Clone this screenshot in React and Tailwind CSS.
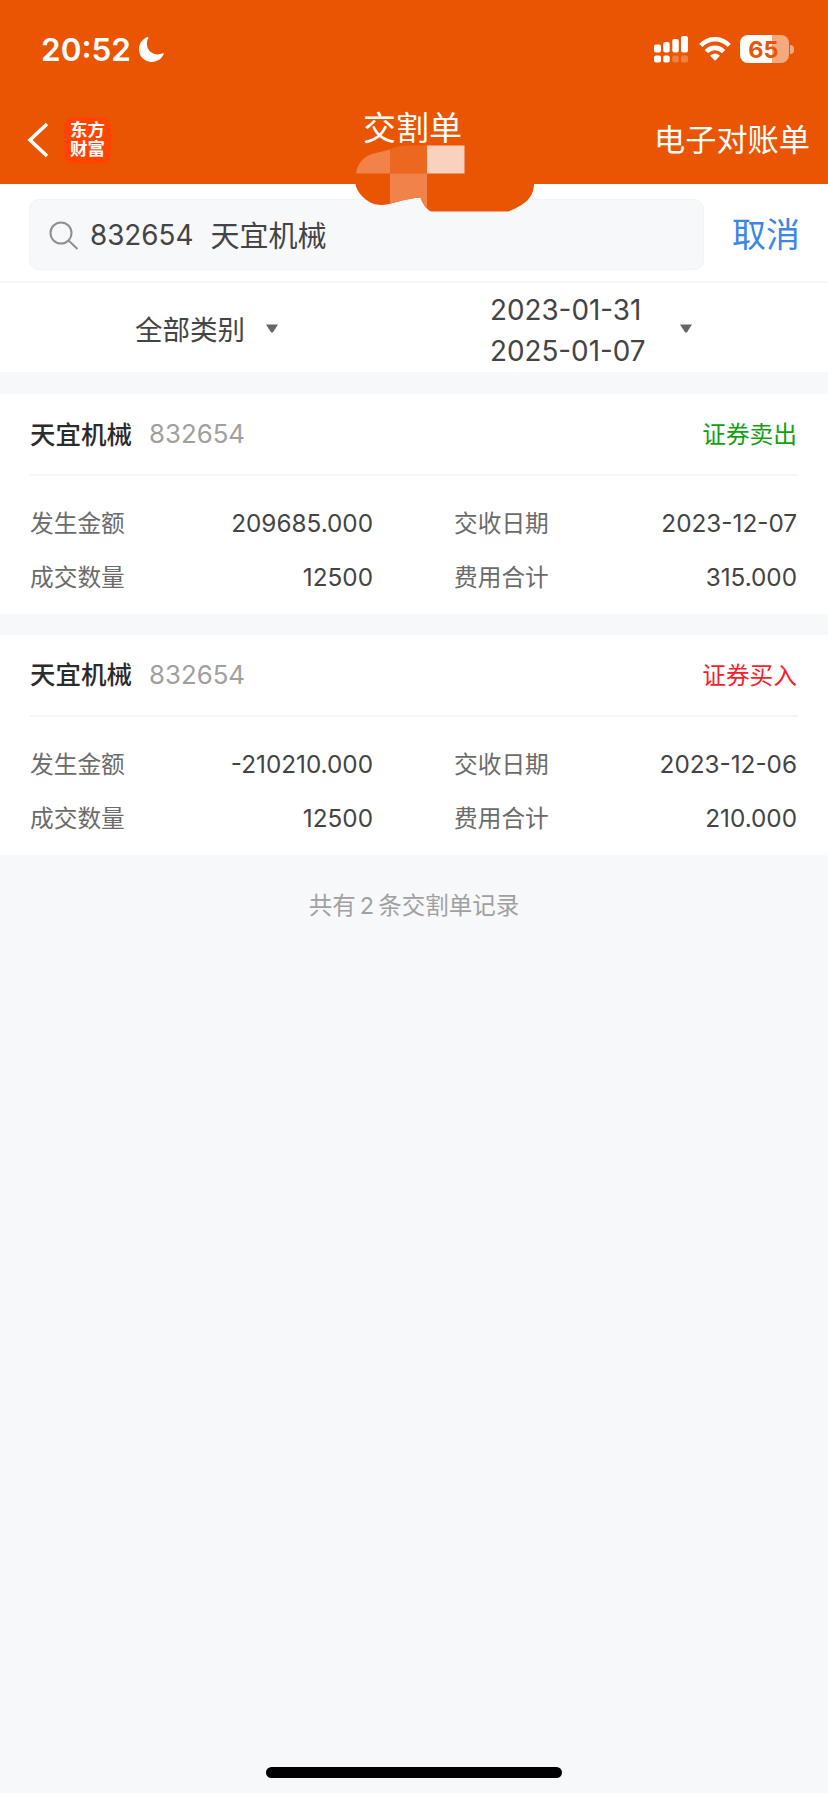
const records = [
  {
    name: '天宜机械',
    code: '832654',
    type: '证券卖出',
    sell: true,
    amount: '209685.000',
    date: '2023-12-07',
    quantity: '12500',
    fee: '315.000',
  },
  {
    name: '天宜机械',
    code: '832654',
    type: '证券买入',
    sell: false,
    amount: '-210210.000',
    date: '2023-12-06',
    quantity: '12500',
    fee: '210.000',
  },
];

function StatusBar() {
  return (
    <div className="flex h-[98px] items-center justify-between pl-[41px] pr-[34px] text-white">
      <div className="flex items-center gap-[8px]">
        <span className="pt-[2px] text-[31.500px] leading-none font-semibold">20:52</span>
        <svg width="25" height="25" viewBox="0 0 25 25" fill="currentColor">
          <path d="M8.5 0C3.5 1.8 0 6.600 0 12.200C0 19.200 5.600 25 12.800 25C18.300 25 23 21.600 24.900 16.800C24.500 16.300 24 16.200 23.200 16.600C16 19.300 8.300 14.800 7.900 7.200C7.800 5 8.300 3 9.200 1.100C9.500 .3 9.300 -.1 8.500 0Z" />
        </svg>
      </div>

      <div className="flex items-center">
        {/* Dual SIM signal */}
        <svg width="35" height="28" viewBox="0 0 35 28" fill="currentColor">
          <rect x="0" y="9.500" width="7" height="8" rx="2" />
          <rect x="9.200" y="7" width="6.500" height="10.500" rx="2" />
          <rect x="18.300" y="4" width="6.500" height="13.500" rx="2" />
          <rect x="27" y="1" width="7" height="16.500" rx="2" />
          <rect x="0" y="20.500" width="7" height="7" rx="2" />
          <rect x="9.200" y="20.500" width="6.500" height="7" rx="2" />
          <rect x="18.300" y="20.500" width="6.500" height="7" rx="2" opacity="0.25" />
          <rect x="27" y="20.500" width="7" height="7" rx="2" opacity="0.25" />
        </svg>
        <svg className="ml-[10px]" width="32" height="24" viewBox="0 0 32 24" fill="none" stroke="currentColor">
          <path d="M1.800 8.500C9.800 .2 22.200 .2 30.200 8.500" strokeWidth="4.600" />
          <path d="M7.400 14.600C12.300 9.600 19.700 9.600 24.600 14.600" strokeWidth="4.600" />
          <path d="M11.200 18.700C14 16.200 18 16.200 20.800 18.700L16.600 23.200Q16 23.700 15.400 23.200Z" fill="currentColor" stroke="none" />
        </svg>
        <div className="ml-[9px] flex items-center gap-px">
          <div className="flex h-[28px] w-[49px] items-center justify-center rounded-[8px] bg-linear-to-r from-white from-65% to-[#f4a97f] to-65%">
            <span className="pt-[2px] pr-[2px] text-[23.500px] leading-none font-bold text-[#ea5504]">65</span>
          </div>
          <div className="h-[9px] w-[4px] rounded-r-full bg-[#f4a97f]" />
        </div>
      </div>
    </div>
  );
}

function TitleBar() {
  return (
    <div className="relative flex h-[86px] items-center justify-between pr-[18px] pl-[27px] text-white">
      <div className="flex items-center gap-[15px] pb-[2px]">
        <svg width="22" height="36" viewBox="0 0 22 36" fill="none" stroke="currentColor" strokeWidth="3.600">
          <path d="M20 2L3 18L20 34" />
        </svg>
        <div className="flex h-[47px] w-[47px] flex-col items-center justify-center rounded-[9px] bg-[#ff4400] font-['Liberation_Serif','Noto_Sans_CJK_SC',serif] text-[17.500px] leading-[19px] font-bold">
          <span>东方</span>
          <span>财富</span>
        </div>
      </div>
      <h1 className="absolute top-[13px] left-[363px] text-[33px] leading-[34px] whitespace-nowrap">交割单</h1>
      <span className="pb-[1px] text-[31.200px] leading-none">电子对账单</span>

      {/* Mosaic patch under the title */}
      <svg className="absolute top-[46px] left-[354px]" width="182" height="68" viewBox="354 144 182 68">
        <path d="M355.500 173V184C357 194 369 205 381 205C391 205 405 198 420.500 197.500C422.500 203 426 209 431 211.500H508C520 207 534 200 534 184V173Z" fill="#ea5504" />
        <path d="M356 173.500C358 161 366 154.500 378 152.500L390 149.500V173.500Z" fill="#f0824a" />
        <path d="M390 149.500Q398 145.500 407 145.500H427V173.500H390Z" fill="#ec681f" />
        <path d="M390 173.500H427V208Q422 203 420.500 197.500Q412 198 390 203.500Z" fill="#f0824a" />
        <path d="M427 145.500H464.500V173.500H427Z" fill="#f8d2be" />
      </svg>
    </div>
  );
}

function Caret() {
  return (
    <svg width="12" height="9" viewBox="0 0 12 9" fill="#666666">
      <path d="M0 0.500H12L7 8.200Q6 9 5 8.200Z" />
    </svg>
  );
}

function Field({ label, value }) {
  return (
    <div className="flex h-[54px] items-center justify-between">
      <span className="pt-[2px] text-[23.700px] text-[#6b6b6b]">{label}</span>
      <span className="pt-[1px] text-[24.300px] text-[#444444]">{value}</span>
    </div>
  );
}

function RecordCard({ record }) {
  return (
    <section className="h-[220px] bg-white px-[30px]">
      <div className="flex h-[82px] items-center border-b-2 border-[#f5f6f7]">
        <span className="pt-[2px] text-[25.500px] font-medium text-[#2b2b2b]">{record.name}</span>
        <span className="ml-[17px] pt-[1px] text-[25.800px] text-[#a0a0a0]">{record.code}</span>
        <span className={record.sell ? 'ml-auto pt-[2px] pr-[1px] text-[23.700px] text-[#12a012]' : 'ml-auto pt-[2px] pr-[1px] text-[23.700px] text-[#f5222d]'}>
          {record.type}
        </span>
      </div>
      <div className="grid grid-cols-[343px_343px] gap-x-[81px] pt-[20px]">
        <Field label="发生金额" value={record.amount} />
        <Field label="交收日期" value={record.date} />
        <Field label="成交数量" value={record.quantity} />
        <Field label="费用合计" value={record.fee} />
      </div>
    </section>
  );
}

export default function App() {
  return (
    <div className="flex h-[1793px] w-[828px] flex-col overflow-hidden bg-[#f6f8fa] font-[Inter,'Noto_Sans_CJK_SC',sans-serif]">
      <header className="relative z-10 h-[184px] bg-[#ea5504]">
        <StatusBar />
        <TitleBar />
      </header>

      {/* Search */}
      <div className="flex h-[99px] items-center border-b-2 border-[#f5f6f7] bg-white pt-[4px] pl-[29px]">
        <div className="flex h-[71px] w-[675px] items-center rounded-[10px] border border-[#f2f3f5] bg-[#f6f8fa] pl-[19px] text-[#444444]">
          <svg className="mt-[2px]" width="30" height="30" viewBox="0 0 30 30" fill="none" stroke="#8f8f8f" strokeWidth="2">
            <circle cx="12" cy="12" r="10.500" />
            <path d="M19.500 19.500L28.500 28" />
          </svg>
          <span className="ml-[11px] pt-[2px] text-[27.800px]">832654</span>
          <span className="ml-[17px] pt-[4px] text-[29px]">天宜机械</span>
        </div>
        <button className="ml-[28px] text-[34px] leading-none text-[#3b86e6]">取消</button>
      </div>

      {/* Filters */}
      <div className="flex h-[89px] items-center bg-white pt-[2px] text-[27.500px] text-[#444444]">
        <div className="flex w-[414px] items-center gap-[21px] pl-[135px]">
          <span className="pt-[4px]">全部类别</span>
          <Caret />
        </div>
        <div className="flex items-center pl-[76px]">
          <div className="w-[190px] pt-[4px] text-[27.800px] leading-[41px]">
            <div>2023-01-31</div>
            <div>2025-01-07</div>
          </div>
          <Caret />
        </div>
      </div>

      {/* Records */}
      <main className="mt-[22px] flex flex-col gap-[20.500px]">
        {records.map((record) => (
          <RecordCard key={record.date} record={record} />
        ))}
      </main>

      <p className="mt-[33px] flex justify-center gap-[4px] text-[23.500px] leading-[36px] text-[#a0a0a0]">
        <span>共有</span>
        <span>2</span>
        <span>条交割单记录</span>
      </p>

      <div className="mx-auto mt-auto mb-[15px] h-[11px] w-[296px] rounded-full bg-black" />
    </div>
  );
}
